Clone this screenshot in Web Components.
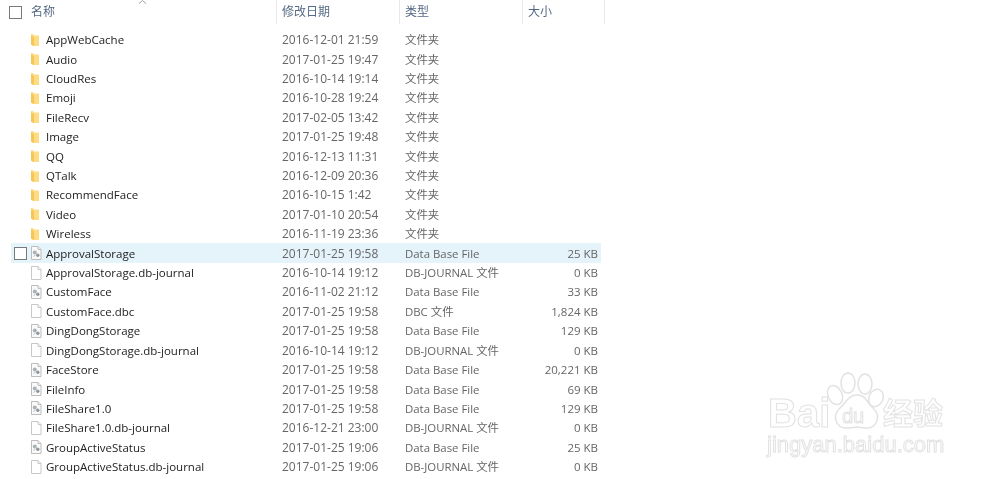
<!DOCTYPE html>
<html>
<head>
<meta charset="utf-8">
<title>Files</title>
<style>
  html, body { margin: 0; background: #fff; overflow: hidden; }
  body { width: 1000px; height: 479px; position: relative; font-family: "Open Sans", "Noto Sans CJK SC", sans-serif; }
  file-list { filter: blur(.3px); }
  baidu-mark { filter: blur(.4px); }
</style>
</head>
<body>
<file-list></file-list>
<baidu-mark></baidu-mark>

<script>
const FOLDER = `<svg width="16" height="16" viewBox="0 0 16 16"><path d="M3 2h2l1 1.500h5v10.500H5l-2-1.500z" fill="#fddc83"/><path d="M3 3.500l3 1.500v9L3 12.500z" fill="#f6c658"/></svg>`;
const PLAIN = `<svg width="16" height="16" viewBox="0 0 16 16"><path d="M3.500 1.500h6.500l3 3v10h-9.500z" fill="#fff" stroke="#c8c8c8"/><path d="M10 1.500v3h3" fill="#f2f2f2" stroke="#c8c8c8"/></svg>`;
const DB = `<svg width="16" height="16" viewBox="0 0 16 16"><path d="M3.500 1.500h6.500l3 3v10h-9.500z" fill="#fafafa" stroke="#bdbdbd"/><path d="M10 1.500v3h3" fill="#eee" stroke="#bdbdbd"/><circle cx="6.800" cy="7.500" r="2" fill="#a9b0b6"/><circle cx="9.800" cy="10.200" r="1.700" fill="#8f979e"/><path d="M5.500 11.500l2-1.500" stroke="#b9bfc4"/></svg>`;

class FileIcon extends HTMLElement {
    connectedCallback() {
        const icons = { folder: FOLDER, db: DB, plain: PLAIN };
        this.attachShadow({ mode: 'open' }).innerHTML = `
          <style>:host { display: block; width: 16px; height: 16px; } svg { display: block; }</style>
          ${icons[this.getAttribute('kind')]}`;
    }
}

class CheckBox extends HTMLElement {
    constructor() {
        super();
        this.attachShadow({ mode: 'open' }).innerHTML = `
          <style>:host { display: block; width: 11px; height: 11px; border: 1px solid #7a7a7a; background: #fff; }</style>`;
    }
}

class FileRow extends HTMLElement {
    connectedCallback() {
        const a = n => this.getAttribute(n) || '';
        this.attachShadow({ mode: 'open' }).innerHTML = `
          <style>
            :host { display: block; height: 19.41px; margin-left: 11px; width: 590px; }
            :host([selected]) { background: #e5f3fb; }
            .r { display: grid; grid-template-columns: 3px 13px 1px 16px 2px 236px 123px 120px 73px; align-items: center; height: 100%; font-size: 12px; line-height: 19px; white-space: nowrap; color: #666; }
            .name { color: #222; font-size: 11.500px; grid-column: 6; }
            .type { font-size: 11.400px; }
            .size { text-align: right; font-size: 11.500px; }
            check-box { visibility: hidden; grid-column: 2; }
            :host([selected]) check-box { visibility: visible; }
            file-icon { grid-column: 4; }
          </style>
          <div class="r">
            <check-box></check-box>
            <file-icon kind="${a('kind')}"></file-icon>
            <span class="name">${a('name')}</span>
            <span>${a('date')}</span>
            <span class="type">${a('type')}</span>
            <span class="size">${a('size')}</span>
          </div>`;
    }
}

class HeaderCell extends HTMLElement {
    constructor() {
        super();
        this.attachShadow({ mode: 'open' }).innerHTML = `
          <style>
            :host { display: block; box-sizing: border-box; height: 24px; padding-left: 5px; border-right: 1px solid #e8e8e8; font-size: 12px; line-height: 23px; color: #566a84; }
          </style>
          <slot></slot>`;
    }
}

const FILES = [
  ['folder','AppWebCache','2016-12-01 21:59','文件夹',''],
  ['folder','Audio','2017-01-25 19:47','文件夹',''],
  ['folder','CloudRes','2016-10-14 19:14','文件夹',''],
  ['folder','Emoji','2016-10-28 19:24','文件夹',''],
  ['folder','FileRecv','2017-02-05 13:42','文件夹',''],
  ['folder','Image','2017-01-25 19:48','文件夹',''],
  ['folder','QQ','2016-12-13 11:31','文件夹',''],
  ['folder','QTalk','2016-12-09 20:36','文件夹',''],
  ['folder','RecommendFace','2016-10-15 1:42','文件夹',''],
  ['folder','Video','2017-01-10 20:54','文件夹',''],
  ['folder','Wireless','2016-11-19 23:36','文件夹',''],
  ['db','ApprovalStorage','2017-01-25 19:58','Data Base File','25 KB'],
  ['plain','ApprovalStorage.db-journal','2016-10-14 19:12','DB-JOURNAL 文件','0 KB'],
  ['db','CustomFace','2016-11-02 21:12','Data Base File','33 KB'],
  ['plain','CustomFace.dbc','2017-01-25 19:58','DBC 文件','1,824 KB'],
  ['db','DingDongStorage','2017-01-25 19:58','Data Base File','129 KB'],
  ['plain','DingDongStorage.db-journal','2016-10-14 19:12','DB-JOURNAL 文件','0 KB'],
  ['db','FaceStore','2017-01-25 19:58','Data Base File','20,221 KB'],
  ['db','FileInfo','2017-01-25 19:58','Data Base File','69 KB'],
  ['db','FileShare1.0','2017-01-25 19:58','Data Base File','129 KB'],
  ['plain','FileShare1.0.db-journal','2016-12-21 23:00','DB-JOURNAL 文件','0 KB'],
  ['db','GroupActiveStatus','2017-01-25 19:06','Data Base File','25 KB'],
  ['plain','GroupActiveStatus.db-journal','2017-01-25 19:06','DB-JOURNAL 文件','0 KB'],
];

class FileList extends HTMLElement {
    connectedCallback() {
        const rows = FILES.map((f, i) => `<file-row kind="${f[0]}" name="${f[1]}" date="${f[2]}" type="${f[3]}" size="${f[4]}"${i === 11 ? ' selected' : ''}></file-row>`).join('');
        this.attachShadow({ mode: 'open' }).innerHTML = `
          <style>
            :host { display: block; }
            .head { display: grid; grid-template-columns: 26px 251px 123px 123px 82px; height: 24px; position: relative; }
            .top { display: flex; padding: 6px 0 0 9px; }
            .sort { position: absolute; left: 138px; top: 0; }
            .rows { padding-top: 6px; }
          </style>
          <div class="head">
            <div class="top"><check-box></check-box></div>
            <header-cell>名称</header-cell>
            <header-cell>修改日期</header-cell>
            <header-cell>类型</header-cell>
            <header-cell>大小</header-cell>
            <svg class="sort" width="9" height="4" viewBox="0 0 9 4"><path d="M1 3.500L4.500 0.500 8 3.500" fill="none" stroke="#a0a0a0"/></svg>
          </div>
          <div class="rows">${rows}</div>`;
    }
}

class BaiduMark extends HTMLElement {
    constructor() {
        super();
        this.attachShadow({ mode: 'open' }).innerHTML = `
          <style>
            :host { display: block; position: absolute; left: 766px; top: 371px; width: 200px; height: 100px; color: #fff; font-family: "Liberation Sans", "Noto Sans CJK SC", sans-serif; }
            span { position: absolute; white-space: nowrap; -webkit-text-stroke: 1px #e2e2e2; font-weight: 700; }
            .bai { left: 2px; top: 22px; font-size: 40px; line-height: 40px; }
            .du { left: 76px; top: 33px; font-size: 20px; line-height: 24px; font-weight: 400; }
            .jy { left: 117px; top: 28px; font-size: 30px; line-height: 30px; }
            .url { left: 1px; top: 62px; font-size: 22px; line-height: 24px; font-weight: 400; }
            svg { position: absolute; left: 0; top: 0; }
          </style>
          <svg width="200" height="75" viewBox="0 0 200 75" fill="#fff" stroke="#e2e2e2" stroke-width="1.500">
            <ellipse cx="69" cy="24" rx="7" ry="10" transform="rotate(-25 69 24)"/>
            <ellipse cx="82" cy="12" rx="7" ry="10"/>
            <ellipse cx="99" cy="13" rx="7" ry="10"/>
            <ellipse cx="110" cy="27" rx="7" ry="9" transform="rotate(25 110 27)"/>
            <path d="M91 24c9 0 10 8 16 13 8 7 5 20-7 20-4 0-6-1-9-1s-6 1-10 1c-12 0-15-13-7-20 6-5 8-13 17-13z"/>
          </svg>
          <span class="bai">Bai</span><span class="du">du</span><span class="jy">经验</span>
          <span class="url">jingyan.baidu.com</span>`;
    }
}

customElements.define('file-icon', FileIcon);
customElements.define('check-box', CheckBox);
customElements.define('file-row', FileRow);
customElements.define('header-cell', HeaderCell);
customElements.define('file-list', FileList);
customElements.define('baidu-mark', BaiduMark);
</script>
</body>
</html>
